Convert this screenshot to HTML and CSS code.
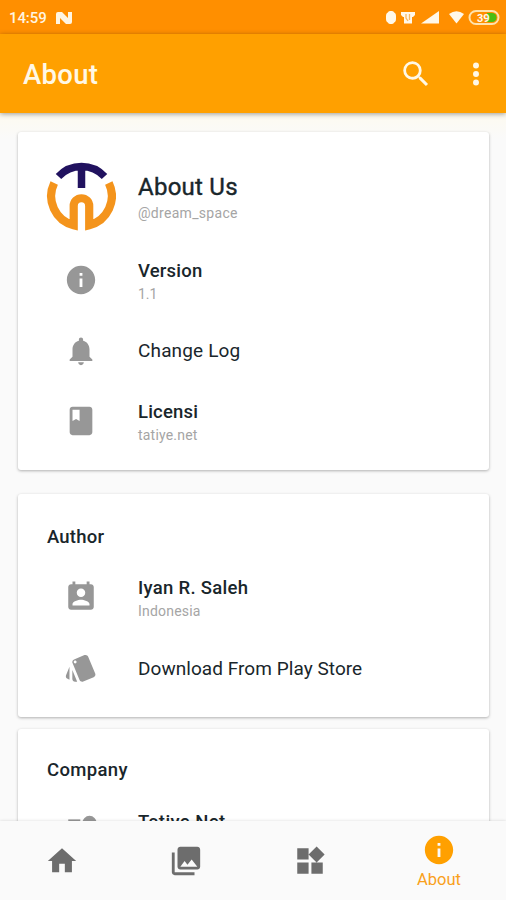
FILE: index.html
```html
<!DOCTYPE html>
<html lang="en">
<head>
<meta charset="utf-8">
<title>About</title>
<link rel="stylesheet" href="styles.css">
</head>
<body>
<div class="app">
  <div class="status">
    <span class="time">14:59</span>
    <svg class="n-icon" width="16" height="12" viewBox="0 0 16 12"><path d="M0 12V2Q0 0 2 0H6L12 6V0H16V10Q16 12 14 12H10L4 6V12Z"/></svg>
    <svg class="status-icons" width="116" height="20" viewBox="386 8 116 20">
      <rect x="386" y="12" width="10" height="11" rx="4"/><rect x="388" y="11" width="6" height="13" rx="2"/>
      <path d="M401 12h14v3l-2 2h-1v6.500h-8V17h-1l-2-2z"/><path class="detail" d="M406 14v4l2 3M409.500 14v6"/>
      <path d="M421 23.500L439 11v12.500z"/>
      <path d="M449 14Q456.500 8.500 464 14L456.500 23.500Z"/>
      <rect class="batt" x="469.500" y="11" width="29" height="13" rx="6.500"/>
      <path class="charge" d="M487 13h5a4.500 4.500 0 0 1 0 9h-5z"/>
      <text x="477" y="21.500">39</text>
    </svg>
  </div>
  <header class="bar">
    <h1>About</h1>
    <svg class="search" width="34" height="34" viewBox="0 0 24 24"><path d="M15.500 14h-.79l-.28-.27A6.471 6.471 0 0 0 16 9.500 6.500 6.500 0 1 0 9.500 16c1.610 0 3.090-.59 4.230-1.570l.27.28v.79l5 4.990L20.490 19l-4.990-5zm-6 0C7.010 14 5 11.990 5 9.500S7.010 5 9.500 5 14 7.010 14 9.500 11.990 14 9.500 14z"/></svg>
    <svg class="more" width="34" height="34" viewBox="0 0 24 24"><circle cx="12" cy="6" r="2.100"/><circle cx="12" cy="12" r="2.100"/><circle cx="12" cy="18" r="2.100"/></svg>
  </header>
  <main>
    <section class="card">
      <div class="row profile">
        <svg class="logo" width="70" height="70" viewBox="0 0 70 70">
          <path class="navy" d="M12.500 15.500A31.500 31.500 0 0 1 58.500 15.500M35.500 5V27"/>
          <path class="gold" d="M8.200 22A30 30 0 0 0 27.700 64.200V45A7.750 7.750 0 0 1 43.200 45V64.200A30 30 0 0 0 62.800 22"/>
        </svg>
        <div class="text"><div class="name">About Us</div><div class="sub handle">@dream_space</div></div>
      </div>
      <div class="row">
        <svg class="icon" viewBox="0 0 24 24"><path d="M12 2C6.480 2 2 6.480 2 12s4.480 10 10 10 10-4.480 10-10S17.520 2 12 2zm1 15h-2v-6h2v6zm0-8h-2V7h2v2z"/></svg>
        <div class="text"><div class="title">Version</div><div class="sub">1.1</div></div>
      </div>
      <div class="row">
        <svg class="icon" viewBox="0 0 24 24"><path d="M12 22c1.100 0 2-.9 2-2h-4c0 1.100.9 2 2 2zm6-6v-5c0-3.070-1.630-5.640-4.500-6.320V4c0-.83-.67-1.500-1.500-1.500s-1.500.67-1.500 1.500v.68C7.640 5.360 6 7.920 6 11v5l-2 2v1h16v-1l-2-2z"/></svg>
        <div class="text plain changelog">Change Log</div>
      </div>
      <div class="row">
        <svg class="icon" viewBox="0 0 24 24"><path d="M18 2H6c-1.100 0-2 .9-2 2v16c0 1.100.9 2 2 2h12c1.100 0 2-.9 2-2V4c0-1.100-.9-2-2-2zM6 4h5v8l-2.500-1.500L6 12V4z"/></svg>
        <div class="text low"><div class="title licensi">Licensi</div><div class="sub net">tatiye.net</div></div>
      </div>
    </section>
    <section class="card author">
      <h2>Author</h2>
      <div class="row">
        <svg class="icon" viewBox="0 0 24 24"><path d="M19 3h-1V1h-2v2H8V1H6v2H5c-1.110 0-2 .9-2 2v14c0 1.100.89 2 2 2h14c1.100 0 2-.9 2-2V5c0-1.100-.9-2-2-2zm-7 3c1.660 0 3 1.340 3 3s-1.340 3-3 3-3-1.340-3-3 1.340-3 3-3zm6 12H6v-1c0-2 4-3.100 6-3.100s6 1.100 6 3.100v1z"/></svg>
        <div class="text low"><div class="title iyan">Iyan R. Saleh</div><div class="sub net">Indonesia</div></div>
      </div>
      <div class="row">
        <svg class="icon" viewBox="0 0 24 24"><path d="M2.530 19.650l1.340.56v-9.030l-2.430 5.860c-.41 1.020.08 2.190 1.090 2.610zm19.500-3.700L17.070 3.980c-.31-.75-1.040-1.210-1.810-1.230-.26 0-.53.040-.79.150L7.100 5.950c-.75.310-1.210 1.030-1.230 1.800-.1.270.04.540.15.800l4.960 11.970c.31.760 1.050 1.220 1.830 1.230.26 0 .52-.05.770-.15l7.360-3.050c1.020-.42 1.510-1.590 1.090-2.600zM7.880 8.750c-.55 0-1-.45-1-1s.45-1 1-1 1 .45 1 1-.45 1-1 1zm-2 11c0 1.100.9 2 2 2h1.450l-3.450-8.340v6.340z"/></svg>
        <div class="text plain">Download From Play Store</div>
      </div>
    </section>
    <section class="card company">
      <h2>Company</h2>
      <div class="row">
        <svg class="icon" viewBox="0 0 24 24"><path d="M3 4.500h8.500V20H3z"/><circle cx="18" cy="7" r="5"/></svg>
        <div class="text"><div class="title tatiye">Tatiye Net</div></div>
      </div>
    </section>
  </main>
  <nav>
    <div class="tab"><svg viewBox="0 0 24 24"><path d="M10 20v-6h4v6h5v-8h3L12 3 2 12h3v8z"/></svg></div>
    <div class="tab"><svg viewBox="0 0 24 24"><path d="M22 16V4c0-1.100-.9-2-2-2H8c-1.100 0-2 .9-2 2v12c0 1.100.9 2 2 2h12c1.100 0 2-.9 2-2zm-11-4l2.030 2.710L16 11l4 5H8l3-4zM2 6v14c0 1.100.9 2 2 2h14v-2H4V6H2z"/></svg></div>
    <div class="tab"><svg viewBox="0 0 24 24"><path d="M13 13v8h8v-8h-8zM3 21h8v-8H3v8zM3 3v8h8V3H3zm13.660-1.310L11 7.340 16.660 13l5.660-5.660-5.660-5.650z"/></svg></div>
    <div class="tab active"><svg viewBox="0 0 24 24"><path d="M12 2C6.480 2 2 6.480 2 12s4.480 10 10 10 10-4.480 10-10S17.520 2 12 2zm1 15h-2v-6h2v6zm0-8h-2V7h2v2z"/></svg><span>About</span></div>
  </nav>
</div>
</body>
</html>
```
FILE: styles.css
```css
* { box-sizing: border-box; }
body { margin: 0; font-family: Roboto, sans-serif; color: #19262b; }
svg { display: block; flex: none; }
.app { width: 506px; height: 900px; display: flex; flex-direction: column; overflow: hidden; background: #fafafa; }
.status { height: 34px; flex: none; display: flex; align-items: center; padding: 1px 4px 0 9px; background: #ff8f00; color: #fff5e2; }
.time { font-size: 15px; font-weight: 500; width: 47px; letter-spacing: -0.1px; }
.n-icon { fill: #fff5e2; }
.status-icons { margin-left: auto; fill: #fff8ea; }
.status-icons .detail { fill: none; stroke: #f9b764; stroke-width: 1.3; }
.status-icons .batt { fill: none; stroke: #ffe2ad; stroke-width: 2; }
.status-icons .charge { fill: #4bbd12; }
.status-icons text { font-size: 11px; font-weight: 700; fill: #fff8ea; }
.bar { height: 79px; flex: none; display: flex; align-items: center; padding: 0 13px 0 23px; background: #ffa000; color: #fff8e6; fill: #fff8e6; box-shadow: 0 1px 5px rgba(0,0,0,.38); z-index: 1; }
h1 { margin: 3px auto 0 0; font-size: 27.5px; font-weight: 500; line-height: 32px; letter-spacing: .3px; }
.search { margin-right: 26px; }
main { flex: 1; min-height: 0; overflow: hidden; padding: 19px 17px 0 18px; background: linear-gradient(#fdfaf0, #fafafa 26px); }
.card { background: #fff; border-radius: 3px; padding: 14px 0; height: 338px; box-shadow: 0 1px 3px rgba(0,0,0,.3); margin-bottom: 24px; }
.row { height: 70.4px; display: flex; align-items: center; }
.profile { height: 99px; }
.logo { margin: 0 21px 0 28px; }
.navy, .gold { fill: none; stroke: #21125f; stroke-width: 7.5; }
.gold { stroke: #f4941c; stroke-width: 8.2; }
.icon { width: 34px; height: 34px; margin: 0 40px 0 46px; fill: #979797; }
.text { padding-top: 4px; white-space: nowrap; }
.text.low { padding-top: 5px; }
.profile .text { margin-left: 1px; padding-top: 6px; }
.name { font-size: 24px; line-height: 28px; font-weight: 400; letter-spacing: .25px; -webkit-text-stroke: .4px; }
.title { font-size: 18.5px; line-height: 23px; font-weight: 500; letter-spacing: .2px; }
.iyan { letter-spacing: .3px; }
.sub { font-size: 14px; line-height: 22px; color: #a5a5a5; }
.handle { letter-spacing: .3px; line-height: 24px; }
.net { letter-spacing: .2px; }
.plain { font-size: 19px; line-height: 24px; padding-top: 2px; letter-spacing: .05px; }
.changelog { padding-top: 1px; letter-spacing: .15px; }
h2 { margin: 18px 0 13px 29px; font-size: 18.5px; line-height: 23px; font-weight: 500; letter-spacing: .2px; }
.author { height: 223px; margin-bottom: 12px; }
.company { height: 223px; }
.company h2 { margin-top: 16px; letter-spacing: .35px; }
.company .row { align-items: flex-start; padding-top: 16px; }
.company .icon { margin-top: 2px; }
.company .text { padding-top: 0; }
.tatiye { letter-spacing: .4px; }
nav { height: 79px; flex: none; display: flex; background: #fafafa; box-shadow: 0 0 3px rgba(0,0,0,.15); z-index: 1; }
.tab { width: 124px; display: flex; flex-direction: column; align-items: center; justify-content: center; }
.tab svg { width: 34px; height: 34px; fill: #6d6d6d; }
.tab.active { width: 134px; color: #f9a01b; font-size: 16.5px; line-height: 26px; padding-top: 4px; }
.tab.active svg { fill: #ffa000; }
```
